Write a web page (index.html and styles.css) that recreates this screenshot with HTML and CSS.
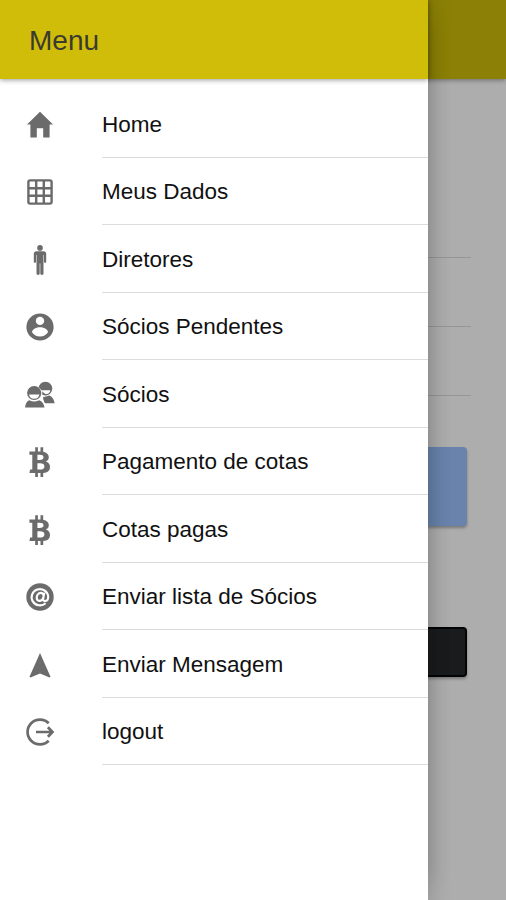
FILE: index.html
```html
<!DOCTYPE html>
<html lang="pt">
<head>
    <meta charset="utf-8">
    <title>Menu</title>
    <link rel="stylesheet" href="styles.css">
</head>
<body>
    <div class="page">
        <div class="page-header"></div>
        <div class="page-content">
            <div class="field"></div>
            <div class="field"></div>
            <div class="field"></div>
            <div class="page-btn btn-blue"></div>
            <div class="page-btn btn-dark"></div>
        </div>
    </div>
    <div class="backdrop"></div>
    <nav class="side-menu">
        <div class="menu-header">
            <h1>Menu</h1>
        </div>
        <ul class="menu-list">
            <li>
                <svg class="icon" viewBox="0 0 32 32"><path d="M16 2.8 29 15.5H25.6V28.4H19.2V19.2H12.8V28.4H6.4V15.5H3Z"/></svg>
                <span>Home</span>
            </li>
            <li>
                <svg class="icon line" viewBox="0 0 32 32"><rect x="4.4" y="4.4" width="23.2" height="23.2" rx="1.8"/><path d="M12.2 4.4V27.6M19.8 4.4V27.6M4.4 12.2H27.6M4.4 19.8H27.6"/></svg>
                <span>Meus Dados</span>
            </li>
            <li>
                <svg class="icon" viewBox="0 0 32 32"><circle cx="16" cy="3.9" r="2.8"/><path d="M12.6 7.3H19.4Q22.2 7.3 22.2 10V17.8Q22.2 18.9 21.1 18.9T20 17.8V11H19.5V29.6Q19.5 30.9 17.9 30.9T16.3 29.6V19.5H15.7V29.6Q15.7 30.9 14.1 30.9T12.5 29.6V11H12V17.8Q12 18.9 10.9 18.9T9.8 17.8V10Q9.8 7.3 12.6 7.3Z"/></svg>
                <span>Diretores</span>
            </li>
            <li>
                <svg class="icon" viewBox="0 0 32 32"><circle cx="16" cy="16" r="13.6"/><circle class="cut" cx="16" cy="9.9" r="4.2"/><path class="cut" d="M8 21.2C8.3 17.7 12.5 16.2 16 16.2S23.7 17.7 24 21.2C22.1 23.9 19.3 25.5 16 25.5S9.9 23.9 8 21.2Z"/></svg>
                <span>Sócios Pendentes</span>
            </li>
            <li>
                <svg class="icon" viewBox="0 0 32 32">
                    <circle cx="21.4" cy="9.6" r="6.9"/>
                    <path class="cut" d="M16.4 11.2H26.4Q25.7 15.1 21.4 15.1Z"/>
                    <path d="M19 18.3 25.4 16.6C28.6 18.2 29.9 20.4 30.6 24.2H20Z"/>
                    <path class="cut" d="M2 14A8.3 8.3 0 0 1 18.4 14Q18.4 17.4 16.6 19.6 20.3 21 21.4 26H1Z"/>
                    <circle cx="10.2" cy="14" r="7.1"/>
                    <path class="cut" d="M5 15.5H15.4Q14.7 19.7 10.2 19.7T5 15.5Z"/>
                    <path d="M5.4 21.3Q10.2 23.9 15 21.3C18.5 22.3 19.9 25 20.5 28.4H1C1.6 25 2.4 22.3 5.4 21.3Z"/>
                </svg>
                <span>Sócios</span>
            </li>
            <li>
                <svg class="icon" viewBox="0 0 32 32"><path fill-rule="evenodd" d="M11.2 1.3H13.9V5.4H16.5V1.3H19.2V5.7C22.8 6.4 24.8 8.3 24.8 11.2 24.8 13.3 23.7 14.7 21.8 15.5 24.5 16.3 26 18.2 26 20.9 26 24.5 23.6 26.5 19.2 26.9V31H16.5V27H13.9V31H11.2V27H5.4L6.1 23.5H8.3V8.8H5.4V5.4H11.2ZM13.4 8.7V14H15.6C18.3 14 19.5 13.2 19.5 11.3S18.2 8.7 15.7 8.7ZM13.4 17.3V23.6H16C19 23.6 20.4 22.5 20.4 20.5S18.9 17.3 16 17.3Z"/></svg>
                <span>Pagamento de cotas</span>
            </li>
            <li>
                <svg class="icon" viewBox="0 0 32 32"><path fill-rule="evenodd" d="M11.2 1.3H13.9V5.4H16.5V1.3H19.2V5.7C22.8 6.4 24.8 8.3 24.8 11.2 24.8 13.3 23.7 14.7 21.8 15.5 24.5 16.3 26 18.2 26 20.9 26 24.5 23.6 26.5 19.2 26.9V31H16.5V27H13.9V31H11.2V27H5.4L6.1 23.5H8.3V8.8H5.4V5.4H11.2ZM13.4 8.7V14H15.6C18.3 14 19.5 13.2 19.5 11.3S18.2 8.7 15.7 8.7ZM13.4 17.3V23.6H16C19 23.6 20.4 22.5 20.4 20.5S18.9 17.3 16 17.3Z"/></svg>
                <span>Cotas pagas</span>
            </li>
            <li>
                <svg class="icon" viewBox="0 0 32 32"><circle cx="16" cy="16" r="13.7"/><path class="cut-line" d="M21.6 22.2A8.3 8.1 0 1 1 24.2 15.5C24.2 18.4 22.7 20.1 21 20.1 19.5 20.1 18.9 19.2 19.2 17.6L20.3 11.8M19.6 14.6C19.3 12.7 18.3 11.9 16.8 11.9 14.4 11.9 12.7 14.1 12.7 16.6 12.7 18.7 13.7 19.9 15.3 19.9 17.3 19.9 18.7 18.7 19.2 16.7"/></svg>
                <span>Enviar lista de Sócios</span>
            </li>
            <li>
                <svg class="icon" viewBox="0 0 32 32"><path d="M16 4 26.5 27.7 25.5 28.6 16 24.4 6.5 28.6 5.5 27.7Z"/></svg>
                <span>Enviar Mensagem</span>
            </li>
            <li>
                <svg class="icon line" viewBox="0 0 32 32"><path class="thick" d="M24.7 7.2A12.4 12.4 0 1 0 24.7 24.8M12 16H28.2M23.9 11.2 28.5 16 23.9 20.8"/></svg>
                <span>logout</span>
            </li>
        </ul>
    </nav>
</body>
</html>
```

FILE: styles.css
```css
* {
    box-sizing: border-box;
}
body {
    margin: 0;
    height: 900px;
    position: relative;
    overflow: hidden;
    font-family: "Liberation Sans", Arial, sans-serif;
    background: #fff;
}
.page-header,
.menu-header {
    height: 79px;
    background: #cfbd0a;
    box-shadow: 0 1px 5px rgba(0,0,0,0.4);
}
.page-content {
    padding: 110px 39px 0 35px;
}
.field {
    height: 69px;
    margin-right: -4px;
    border-bottom: 1px solid #dedede;
}
.page-btn {
    border-radius: 4px;
    box-shadow: 0 2px 3px rgba(0,0,0,0.3);
}
.btn-blue {
    height: 79px;
    margin-top: 51px;
    background: #9bc2ff;
}
.btn-dark {
    height: 50px;
    margin-top: 101px;
    background: #26292a;
    border: 2px solid #050606;
}
.backdrop {
    position: absolute;
    inset: 0;
    background: rgba(0,0,0,0.32);
}
.side-menu {
    position: absolute;
    top: 0;
    left: 0;
    width: 428px;
    height: 900px;
    background: #fff;
    box-shadow: 0 -20px 22px rgba(0,0,0,0.16), 0 20px 22px rgba(0,0,0,0.16);
}
.menu-header {
    display: flex;
    align-items: center;
    padding-left: 29px;
}
.menu-header h1 {
    margin: 2px 0 0;
    font-size: 28px;
    font-weight: normal;
    color: #3a3a30;
}
.menu-list {
    margin: 0;
    padding: 11px 0 0 24px;
    list-style: none;
}
.menu-list li {
    display: flex;
    align-items: center;
    gap: 46px;
    height: 67.5px;
}
.menu-list span {
    flex: 1;
    height: 67.5px;
    padding-top: 0.5px;
    line-height: 67px;
    font-size: 22.5px;
    color: #111;
    border-bottom: 1px solid #dcdcdc;
}
.icon {
    width: 32px;
    height: 32px;
    margin-top: 1.5px;
    fill: #6b6b6b;
}
.line {
    fill: none;
    stroke: #6b6b6b;
    stroke-width: 2.4;
}
.thick {
    stroke-width: 2.7;
}
.cut {
    fill: #fff;
}
.cut-line {
    fill: none;
    stroke: #fff;
    stroke-width: 2.1;
}
```
